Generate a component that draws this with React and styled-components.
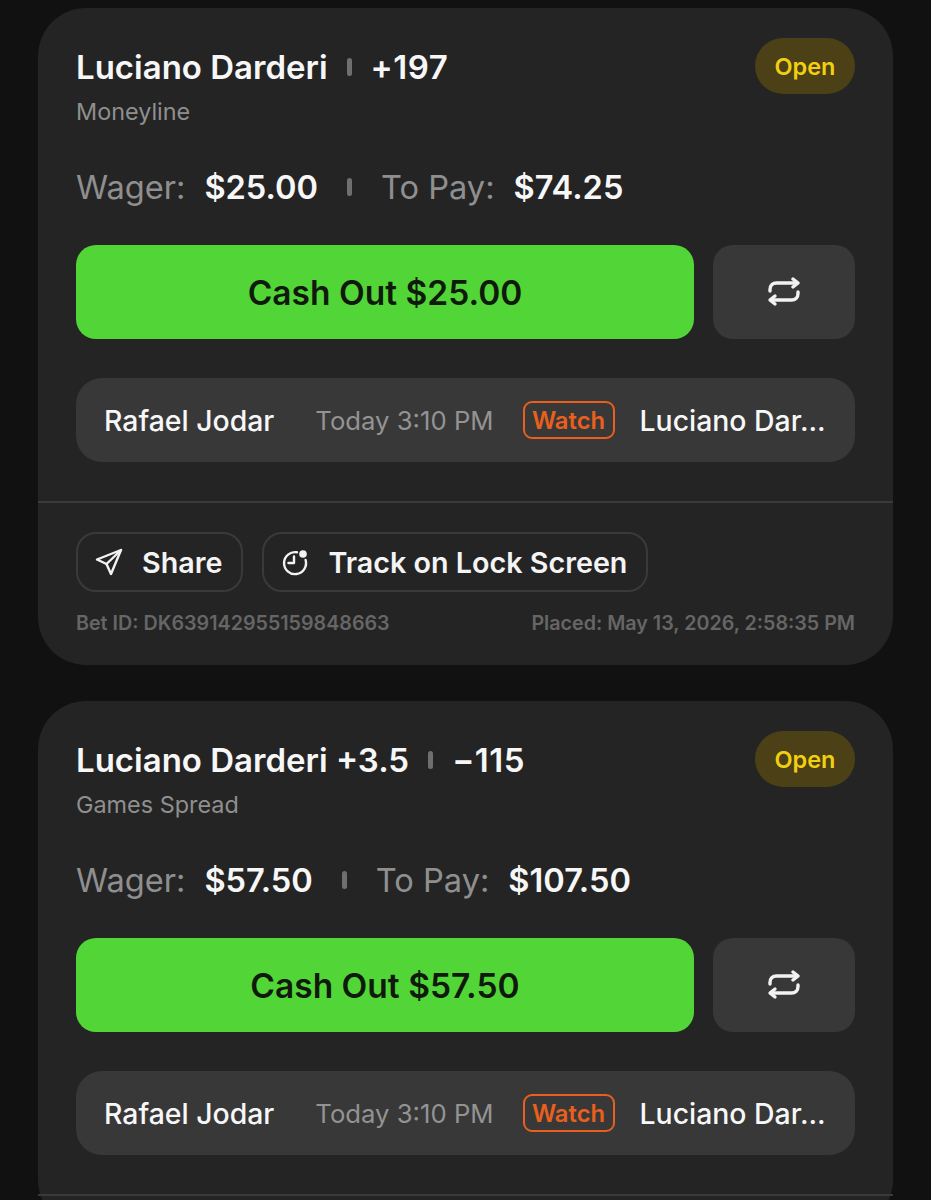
import React from 'react';
import styled, { createGlobalStyle } from 'styled-components';

const Global = createGlobalStyle`
  html, body { margin: 0; padding: 0; background: #111111; }
  body { font-family: Inter, "Liberation Sans", sans-serif; }
`;

const Page = styled.div`
  height: 1200px;
  overflow: hidden;
  box-sizing: border-box;
  padding: 8px 38px 0;
  display: flex;
  flex-direction: column;
  gap: 36px;
`;

const Card = styled.section`
  flex: none;
  background: #242424;
  border-radius: 48px;
  padding-top: 30px;
  padding-bottom: 32px;
`;

const Body = styled.div`
  padding: 0 38px;
`;

const Header = styled.div`
  display: flex;
  justify-content: space-between;
  align-items: flex-start;
`;

const HeaderText = styled.div`
  padding-top: 7px;
`;

const Title = styled.div`
  display: flex;
  align-items: center;
  height: 44px;
  font-size: 33px;
  font-weight: 600;
  color: #f7f7f7;
`;

const Odds = styled.span`
  letter-spacing: 0.5px;
`;

const Tick = styled.span`
  width: 5px;
  height: 18px;
  border-radius: 3px;
  background: #6f6f6f;
  margin: 0 ${(p) => p.$gap}px;
`;

const Sub = styled.div`
  margin-top: 8px;
  height: 30px;
  line-height: 30px;
  font-size: 23.4px;
  color: #8f8f8f;
`;

const Badge = styled.div`
  width: 100px;
  height: 56px;
  border-radius: 28px;
  background: #4b4016;
  color: #f2cf0f;
  font-size: 23.5px;
  font-weight: 600;
  display: flex;
  align-items: center;
  justify-content: center;
`;

const Money = styled.div`
  margin-top: 40px;
  height: 40px;
  display: flex;
  align-items: center;
  font-size: 32.6px;
`;

const MoneyLabel = styled.span`
  color: #8f8f8f;
  margin-right: 19px;
`;

const MoneyValue = styled.span`
  color: #f7f7f7;
  font-weight: 600;
`;

const Actions = styled.div`
  margin-top: 38px;
  display: flex;
  gap: 19px;
`;

const CashOut = styled.button`
  flex: 1;
  height: 94px;
  padding: 2px 0 0;
  border: none;
  border-radius: 20px;
  background: #52d637;
  color: #0f1a0c;
  font: 600 33.5px Inter, sans-serif;
`;

const Repeat = styled.button`
  width: 142px;
  height: 94px;
  border: none;
  border-radius: 20px;
  background: #383838;
  display: flex;
  align-items: center;
  justify-content: center;
`;

const Match = styled.div`
  margin-top: 39px;
  height: 84px;
  box-sizing: border-box;
  padding: 0 28px;
  border-radius: 26px;
  background: #383838;
  display: flex;
  align-items: center;
  font-size: 28.4px;
  white-space: nowrap;
`;

const Team = styled.span`
  flex: none;
  font-weight: 500;
  color: #f7f7f7;
`;

const Time = styled.span`
  flex: none;
  margin-left: 41px;
  color: #939393;
  font-size: 25.7px;
`;

const Watch = styled.span`
  flex: none;
  margin: 0 25px 0 29px;
  width: 92px;
  height: 38px;
  box-sizing: border-box;
  border: 2px solid #e8601c;
  border-radius: 9px;
  color: #e8601c;
  font-size: 23.8px;
  font-weight: 600;
  display: flex;
  align-items: center;
  justify-content: center;
`;

const Divider = styled.div`
  margin-top: 39px;
  height: 2px;
  background: #3a3a3a;
`;

const Pills = styled.div`
  margin-top: 29px;
  display: flex;
  gap: 19px;
`;

const Pill = styled.button`
  height: 60px;
  box-sizing: border-box;
  padding: 0 19px 0 17px;
  border: 2px solid #3a3a3a;
  border-radius: 20px;
  background: transparent;
  color: #f4f4f4;
  font: 600 28.7px Inter, sans-serif;
  display: flex;
  align-items: center;
  gap: 19px;
`;

const Meta = styled.div`
  margin-top: 21px;
  height: 20px;
  display: flex;
  justify-content: space-between;
  align-items: center;
  font-size: 19.7px;
  font-weight: 600;
  color: #666666;
`;

const RepeatIcon = () => (
  <svg width="34" height="30" viewBox="0 0 34 30" fill="none" stroke="#f2f2f2" strokeWidth="3.4" strokeLinecap="round" strokeLinejoin="round">
    <path d="M3 14v-1.500c0-4 2.500-6.500 6.500-6.500H30" />
    <path d="M26 2l5 4-5 4" />
    <path d="M31 15v1.500c0 4-2.500 6.500-6.500 6.500H4" />
    <path d="M8 19l-5 4 5 4" />
  </svg>
);

const ShareIcon = () => (
  <svg width="28" height="28" viewBox="0 0 28 28" fill="none" stroke="#f2f2f2" strokeWidth="2.400" strokeLinejoin="round" strokeLinecap="round">
    <path d="M26 2L2 11.500l9.500 4.500L16 26z" />
    <path d="M26 2L11.500 16" />
  </svg>
);

const TrackIcon = () => (
  <svg width="28" height="28" viewBox="0 0 28 28" fill="none" stroke="#f2f2f2" strokeWidth="2.400" strokeLinecap="round" strokeLinejoin="round">
    <path d="M16 4.300A11 11 0 1 0 24.600 12" />
    <path d="M13 8.500V15H7.500" />
    <circle cx="22" cy="6" r="3.800" fill="#f2f2f2" stroke="none" />
  </svg>
);

const bets = [
  {
    title: 'Luciano Darderi',
    odds: '+197',
    market: 'Moneyline',
    wager: '$25.00',
    pay: '$74.25',
    footer: { id: 'DK639142955159848663', placed: 'May 13, 2026, 2:58:35 PM' },
  },
  {
    // the photo ends just under this card's divider
    title: 'Luciano Darderi +3.5',
    odds: '−115',
    market: 'Games Spread',
    wager: '$57.50',
    pay: '$107.50',
  },
];

export default function App() {
  return (
    <Page>
      <Global />
      {bets.map((bet) => (
        <Card key={bet.title}>
          <Body>
            <Header>
              <HeaderText>
                <Title>
                  {bet.title}
                  <Tick $gap={19} />
                  <Odds>{bet.odds}</Odds>
                </Title>
                <Sub>{bet.market}</Sub>
              </HeaderText>
              <Badge>Open</Badge>
            </Header>
            <Money>
              <MoneyLabel>Wager:</MoneyLabel>
              <MoneyValue>{bet.wager}</MoneyValue>
              <Tick $gap={29} />
              <MoneyLabel>To Pay:</MoneyLabel>
              <MoneyValue>{bet.pay}</MoneyValue>
            </Money>
            <Actions>
              <CashOut>Cash Out {bet.wager}</CashOut>
              <Repeat><RepeatIcon /></Repeat>
            </Actions>
            <Match>
              <Team>Rafael Jodar</Team>
              <Time>Today 3:10 PM</Time>
              <Watch>Watch</Watch>
              <Team>Luciano Dar...</Team>
            </Match>
          </Body>
          <Divider />
          {bet.footer && (
            <Body>
              <Pills>
                <Pill><ShareIcon />Share</Pill>
                <Pill><TrackIcon />Track on Lock Screen</Pill>
              </Pills>
              <Meta>
                <span>Bet ID: {bet.footer.id}</span>
                <span>Placed: {bet.footer.placed}</span>
              </Meta>
            </Body>
          )}
        </Card>
      ))}
    </Page>
  );
}
